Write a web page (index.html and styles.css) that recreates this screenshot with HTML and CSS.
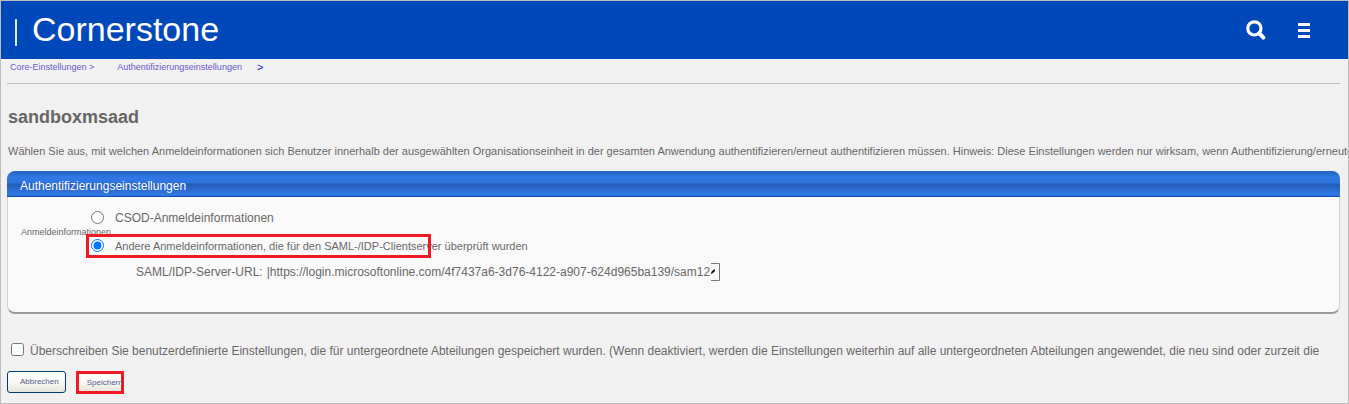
FILE: index.html
```html
<!DOCTYPE html>
<html lang="de">
<head>
<meta charset="utf-8">
<title>Cornerstone</title>
<link rel="stylesheet" href="styles.css">
</head>
<body>
<div class="page">
  <header class="topbar">
    <div class="brand"><span class="brand-rule"></span>Cornerstone</div>
    <div class="tools">
      <button class="tool" type="button" aria-label="Suche">
        <svg width="20" height="20" viewBox="0 0 20 20"><circle cx="8.4" cy="8.4" r="6.6" fill="none" stroke="#fff" stroke-width="3.2"/><path d="M13.2 13.2L17.4 17.6" stroke="#fff" stroke-width="4" stroke-linecap="round"/></svg>
      </button>
      <button class="tool" type="button" aria-label="Menü">
        <svg width="12" height="16" viewBox="0 0 12 16"><path d="M0 1h12v3H0zM0 7h12v3H0zM0 13h12v3H0z" fill="#fff"/></svg>
      </button>
    </div>
  </header>
  <main class="content">
    <nav class="crumbs">
      <a class="crumb" href="#">Core-Einstellungen &gt;</a>
      <a class="crumb" href="#">Authentifizierungseinstellungen</a>
      <span class="crumb-end">&gt;</span>
    </nav>
    <h1 class="title">sandboxmsaad</h1>
    <p class="intro">Wählen Sie aus, mit welchen Anmeldeinformationen sich Benutzer innerhalb der ausgewählten Organisationseinheit in der gesamten Anwendung authentifizieren/erneut authentifizieren müssen. Hinweis: Diese Einstellungen werden nur wirksam, wenn Authentifizierung/erneute</p>
    <section class="panel">
      <h2 class="panel-title">Authentifizierungseinstellungen</h2>
      <div class="panel-body" role="radiogroup" aria-labelledby="cred">
        <div class="group-label" id="cred">Anmeldeinformationen</div>
        <div class="options">
          <div class="option">
            <input class="radio" type="radio" name="cred" id="csod"><label class="large" for="csod">CSOD-Anmeldeinformationen</label>
          </div>
          <div class="option marked">
            <input class="radio" type="radio" name="cred" id="saml" checked><label class="medium" for="saml">Andere Anmeldeinformationen, die für den SAML-/IDP-Clientserver überprüft wurden</label>
          </div>
          <div class="url-row">
            <label for="url">SAML/IDP-Server-URL:</label>
            <input class="url" type="text" id="url" value="|https://login.microsoftonline.com/4f7437a6-3d76-4122-a907-624d965ba139/sam12">
            <svg class="field-end" width="10" height="18" viewBox="0 0 10 18"><path d="M0 .5H8.5V17.5H0" fill="none" stroke="#777"/><path d="M0 10L1 8L4 6V8L2 10L0 11Z" fill="#111"/></svg>
          </div>
        </div>
      </div>
    </section>
    <div class="override">
      <input class="check" type="checkbox" id="override"><label for="override">Überschreiben Sie benutzerdefinierte Einstellungen, die für untergeordnete Abteilungen gespeichert wurden. (Wenn deaktiviert, werden die Einstellungen weiterhin auf alle untergeordneten Abteilungen angewendet, die neu sind oder zurzeit die</label>
    </div>
    <div class="actions">
      <button class="btn" type="button">Abbrechen</button>
      <button class="btn btn-save" type="button">Speichern</button>
    </div>
  </main>
</div>
</body>
</html>
```
FILE: styles.css
```css
*, *::before, *::after { box-sizing: border-box; }
body {
  margin: 0;
  font-family: "Liberation Sans", Arial, sans-serif;
  color: #6b6769;
  background: #f1f1f1;
}
.page {
  min-height: 100vh;
  border: 1px solid #bdbdbd;
  background: #f1f1f1;
  overflow: hidden;
}
.topbar {
  display: flex;
  justify-content: space-between;
  align-items: center;
  height: 58px;
  padding: 0 38px 0 14px;
  background: #0048ba;
}
.brand {
  display: flex;
  align-items: center;
  gap: 15px;
  padding-bottom: 2px;
  font-size: 34px;
  line-height: 40px;
  color: #fff;
}
.brand-rule { width: 2px; height: 27px; margin-top: 6px; background: #dfe8f7; }
.tools { display: flex; align-items: center; gap: 32px; }
.tool { display: flex; padding: 0; border: 0; background: none; }
.content { padding: 0 8px 0 6px; }
.crumbs {
  display: flex;
  height: 25px;
  padding: 1px 0 0 3px;
  border-bottom: 1px solid #bdbdbd;
  font-size: 9px;
  line-height: 15px;
}
.crumb { margin-right: 23px; color: #6a5acd; text-decoration: none; }
.crumb + .crumb { margin-right: 15px; }
.crumb-end { color: #1414d2; font-size: 11px; }
.title {
  margin: 22px 0 0 1px;
  font-size: 18px;
  line-height: 22px;
  color: #666;
}
.intro {
  margin: 15px 0 0 1px;
  font-size: 11px;
  line-height: 16px;
  white-space: nowrap;
}
.panel {
  margin-top: 12px;
  border: 1px solid #d2d2d2;
  border-top: 0;
  border-bottom: 2px solid #999;
  border-radius: 8px;
  background: #f9f9f9;
}
.panel-title {
  margin: 0 -1px;
  padding: 2px 13px 0;
  height: 26px;
  border-bottom: 1px solid #0f4db5;
  border-radius: 8px 8px 0 0;
  background: linear-gradient(#2360c0, #3078e4 25%, #2e74df 48%, #245cb5 52%, #2f76e2 90%);
  font-size: 12px;
  line-height: 26px;
  font-weight: normal;
  color: #fff;
}
.panel-body {
  display: flex;
  min-height: 115px;
  padding: 11px 0 0 13px;
}
.group-label {
  width: 70px;
  padding-top: 16px;
  font-size: 9px;
  line-height: 16px;
  white-space: nowrap;
}
.options { display: flex; flex-direction: column; align-items: flex-start; }
.option { display: flex; align-items: center; height: 19px; }
.radio { width: 13px; height: 13px; margin: 0 11px 0 0; }
.large { font-size: 12px; line-height: 20px; }
.medium { font-size: 11px; line-height: 20px; }
.marked { position: relative; margin-top: 9px; white-space: nowrap; }
.marked::after {
  content: "";
  position: absolute;
  left: -5px;
  top: -2px;
  width: 345px;
  height: 24px;
  border: 3px solid #ed1c24;
  pointer-events: none;
}
.url-row {
  position: relative;
  display: flex;
  align-items: center;
  gap: 4px;
  margin: 8px 0 0 45px;
  font-size: 12px;
  line-height: 18px;
}
.url {
  width: 462px;
  padding: 0;
  border: 0;
  background: none;
  color: inherit;
  font: inherit;
}
.field-end { position: absolute; right: 8px; top: 0; }
.override {
  display: flex;
  align-items: center;
  gap: 6px;
  margin-top: 28px;
  padding-left: 4px;
  font-size: 12px;
  line-height: 18px;
  white-space: nowrap;
}
.check { flex: none; width: 13px; height: 13px; margin: 0 0 4px; }
.actions { display: flex; gap: 10px; margin-top: 11px; }
.btn {
  height: 22px;
  padding: 0 6px 0 12px;
  border: 1px solid #003c74;
  border-radius: 3px;
  background: linear-gradient(#fff, #f6f6f1 60%, #e6e5dc);
  font-family: inherit;
  font-size: 8px;
  line-height: 20px;
  color: #56608c;
}
.btn-save {
  width: 48px;
  height: 23px;
  padding: 0 0 0 8px;
  border: 3px solid #ed1c24;
  border-radius: 0;
  line-height: 17px;
  white-space: nowrap;
}
```
